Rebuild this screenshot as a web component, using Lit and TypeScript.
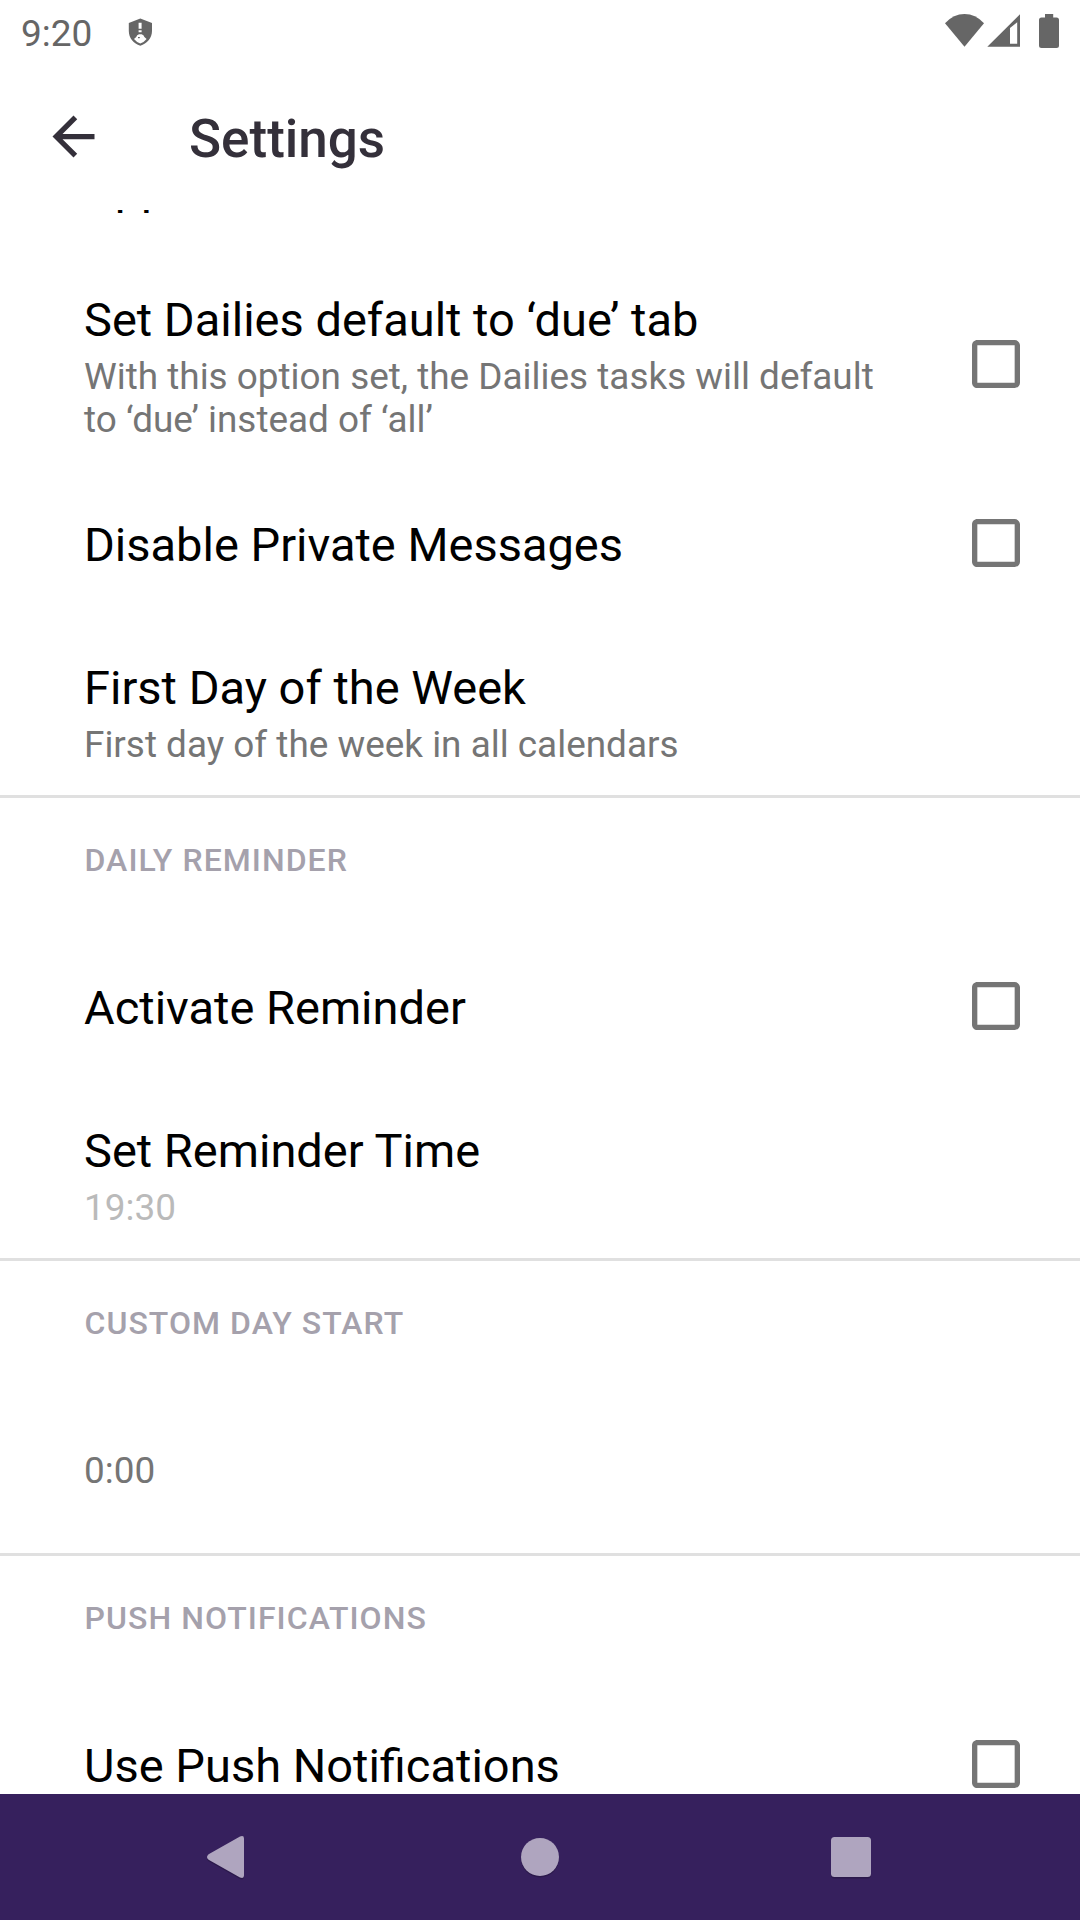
import { LitElement, html, svg, css, nothing } from "lit";
import { customElement, property } from "lit/decorators.js";

@customElement("check-box")
class CheckBox extends LitElement {
  static styles = css`
    :host { display: block; width: 64px; height: 64px; }
    .box { display: block; width: 64px; height: 64px; fill: #757575; }
  `;
  render() {
    return html`<svg class="box" viewBox="0 0 24 24">
      <path d="M19 5v14H5V5h14m0-2H5c-1.1 0-2 .9-2 2v14c0 1.1.9 2 2 2h14c1.1 0 2-.9 2-2V5c0-1.1-.9-2-2-2z"/>
    </svg>`;
  }
}

@customElement("pref-row")
class PrefRow extends LitElement {
  @property() label = "";
  @property() summary = "";
  @property({ type: Boolean }) check = false;
  @property({ type: Boolean }) dim = false;

  static styles = css`
    :host {
      display: flex;
      align-items: center;
      flex-shrink: 0;
      box-sizing: border-box;
      padding: 0 52px 0 84px;
    }
    .text { flex: 1; align-self: flex-start; padding-top: var(--top, 48px); }
    .label { font-size: 47px; line-height: 56px; color: #000; white-space: nowrap; }
    .summary { font-size: 36.9px; line-height: 43px; color: #757575; max-width: 800px; }
    .label + .summary { margin-top: 7px; }
    .summary.dim { color: #bababa; }
  `;
  render() {
    return html`
      <div class="text">
        ${this.label ? html`<div class="label">${this.label}</div>` : nothing}
        ${this.summary ? html`<div class="summary ${this.dim ? "dim" : ""}">${this.summary}</div>` : nothing}
      </div>
      ${this.check ? html`<check-box></check-box>` : nothing}
    `;
  }
}

@customElement("app-root")
class AppRoot extends LitElement {
  static styles = css`
    :host {
      display: flex;
      flex-direction: column;
      width: 1080px;
      height: 1920px;
      overflow: hidden;
      background: #fff;
      font-family: Roboto, sans-serif;
    }
    .status {
      display: flex;
      height: 63px;
      flex-shrink: 0;
      color: #666;
      fill: #666;
    }
    .clock { box-sizing: border-box; width: 128px; padding: 12px 0 0 21px; font-size: 37px; line-height: 43px; }
    .shield { width: 26px; height: 63px; }
    .signals { width: 180px; height: 63px; margin-left: auto; }
    .toolbar {
      display: flex;
      height: 147px;
      flex-shrink: 0;
      align-items: center;
      padding-left: 42px;
      color: #34303a;
    }
    .back { width: 63px; height: 63px; fill: #34303a; }
    .heading { margin: 5px 0 0 84px; font-size: 53px; line-height: 62px; font-weight: 500; }
    .list {
      display: flex;
      flex-direction: column;
      flex: 1;
      min-height: 0;
      overflow: hidden;
    }
    .peek { height: 48px; flex-shrink: 0; padding-left: 84px; font-size: 47px; line-height: 56px; color: #000; }
    .peek-label { margin-top: -50px; }
    .tall { height: 211px; --top: 34px; }
    .single { height: 148px; --top: 48px; }
    .double { height: 178px; --top: 43px; }
    .value { height: 158px; --top: 54px; }
    .section {
      box-sizing: border-box;
      height: 137px;
      flex-shrink: 0;
      padding: 43px 0 0 84.5px;
      border-top: 3px solid #e0e0e0;
      color: #a5a1ac;
      font-size: 32px;
      line-height: 38px;
      font-weight: 500;
      letter-spacing: 1.05px;
    }
    .nav { height: 126px; flex-shrink: 0; background: #36205d; }
    .nav-icons { display: block; width: 1080px; height: 126px; fill: #afa5bf; }
    .nav-shadow { fill: #2b194b; }
  `;

  private navShapes() {
    return svg`
      <path d="M208.6 60.2L240 42.4q4-1.6 4 2V81.6q0 3.6-4 2L208.6 65.8q-3.2-2.8 0-5.6z"/>
      <circle cx="540" cy="63" r="19"/>
      <rect x="831" y="43" width="40" height="40" rx="3.5"/>`;
  }

  render() {
    return html`
      <div class="status">
        <div class="clock">9:20</div>
        <svg class="shield" viewBox="128 0 26 63">
          <path fill-rule="evenodd" d="M140.3 18.6L152 23V31C152 38 147 43.6 140.3 45.7C133.6 43.6 128.8 38 128.8 31V23z
            M138.6 22.8V28.8H141.6V22.8z M138.6 30.2V32.2H141.6V30.2z
            M134 39Q137 42.6 140.3 43.6Q143.6 42.6 146.6 39L144.4 37L143.4 35.2L141.6 34.2H139L137.2 35.2L136.2 37z"/>
          <rect x="138" y="37" width="1.8" height="1.2"/>
        </svg>
        <svg class="signals" viewBox="900 0 180 63">
          <path d="M945 23.2Q953.5 14 964.5 14T984 23.2L964.5 46.7z"/>
          <path fill-rule="evenodd" d="M1020 14.3V46.8H987.3z M1010 28V43.8H1017.2V22.2z"/>
          <path d="M1045 14h8.2v3.4h3.3q2.5 0 2.5 2.5V45.4q0 2.5-2.5 2.5h-15q-2.5 0-2.5-2.5V19.9q0-2.5 2.5-2.5h3.5z"/>
        </svg>
      </div>
      <div class="toolbar">
        <svg class="back" viewBox="0 0 24 24">
          <path d="M20 11H7.83l5.59-5.59L12 4l-8 8 8 8 1.41-1.41L7.83 13H20v-2z"/>
        </svg>
        <div class="heading">Settings</div>
      </div>
      <div class="list">
        <div class="peek"><div class="peek-label">App</div></div>
        <pref-row class="tall" check label="Set Dailies default to ‘due’ tab"
          summary="With this option set, the Dailies tasks will default to ‘due’ instead of ‘all’"></pref-row>
        <pref-row class="single" check label="Disable Private Messages"></pref-row>
        <pref-row class="double" label="First Day of the Week" summary="First day of the week in all calendars"></pref-row>
        <div class="section">DAILY REMINDER</div>
        <pref-row class="single" check label="Activate Reminder"></pref-row>
        <pref-row class="double" dim label="Set Reminder Time" summary="19:30"></pref-row>
        <div class="section">CUSTOM DAY START</div>
        <pref-row class="value" summary="0:00"></pref-row>
        <div class="section">PUSH NOTIFICATIONS</div>
        <pref-row class="single" check label="Use Push Notifications"></pref-row>
      </div>
      <div class="nav">
        <svg class="nav-icons" viewBox="0 0 1080 126">
          <g class="nav-shadow" transform="translate(0 1.5)">${this.navShapes()}</g>
          ${this.navShapes()}
        </svg>
      </div>
    `;
  }
}
